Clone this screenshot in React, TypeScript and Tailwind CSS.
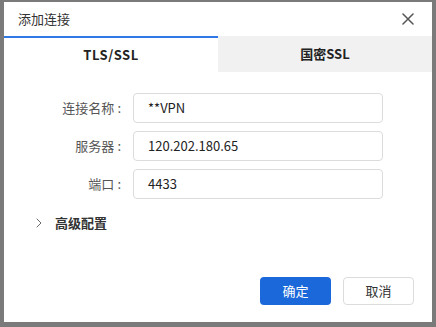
import { ChevronRight } from "lucide-react";

const fields = [
  { label: "连接名称", value: "**VPN" },
  { label: "服务器", value: "120.202.180.65" },
  { label: "端口", value: "4433" },
];

export default function App() {
  return (
    <div
      className="h-[327px] w-[436px] bg-[#7a7a7a] pl-[4px] pt-[2px]"
      style={{ fontFamily: '"Noto Sans CJK SC", "Noto Sans", sans-serif' }}
    >
      <div className="flex h-[320px] w-[428px] flex-col bg-white">
        {/* title bar */}
        <div className="flex h-[34px] items-center justify-between pl-[14px] pr-[18px]">
          <span className="text-[13px] text-[#333]">添加连接</span>
          <svg width="12" height="12" viewBox="0 0 12 12" className="text-[#555]">
            <path d="M1 1L11 11M11 1L1 11" stroke="currentColor" strokeWidth="1.5" strokeLinecap="round" />
          </svg>
        </div>

        {/* tabs */}
        <div className="grid h-[36px] grid-cols-2">
          <div className="flex items-center justify-center border-t-2 border-[#2f78e6] text-[13px] font-bold tracking-[0.5px] text-[#222]">
            TLS/SSL
          </div>
          <div className="flex items-center justify-center bg-[#f1f1f1] text-[13px] font-bold text-[#222]">
            国密SSL
          </div>
        </div>

        {/* form */}
        <div className="mt-[21px] flex flex-col gap-[8px]">
          {fields.map((f) => (
            <div key={f.label} className="flex items-center">
              <span className="w-[117px] text-right text-[13px] text-[#555]">
                {f.label}
                <span className="ml-[3px]">:</span>
              </span>
              <div className="ml-[12px] flex h-[30px] w-[250px] items-center rounded-[4px] border border-[#dcdcdc] pl-[14px] text-[13px] text-[#222]">
                {f.value}
              </div>
            </div>
          ))}
        </div>

        <div className="mt-[14px] flex h-[20px] items-center pl-[27px]">
          <ChevronRight size={16} strokeWidth={1.3} className="text-[#555]" />
          <span className="ml-[8px] text-[13px] font-bold text-[#333]">高级配置</span>
        </div>

        {/* footer */}
        <div className="mt-auto flex justify-end gap-[12px] pb-[17px] pr-[18px]">
          <button className="h-[28px] w-[71px] rounded-[4px] bg-[#1b68da] text-[13px] text-white">
            确定
          </button>
          <button className="h-[28px] w-[71px] rounded-[4px] border border-[#dcdcdc] bg-white text-[13px] text-[#333]">
            取消
          </button>
        </div>
      </div>
    </div>
  );
}
